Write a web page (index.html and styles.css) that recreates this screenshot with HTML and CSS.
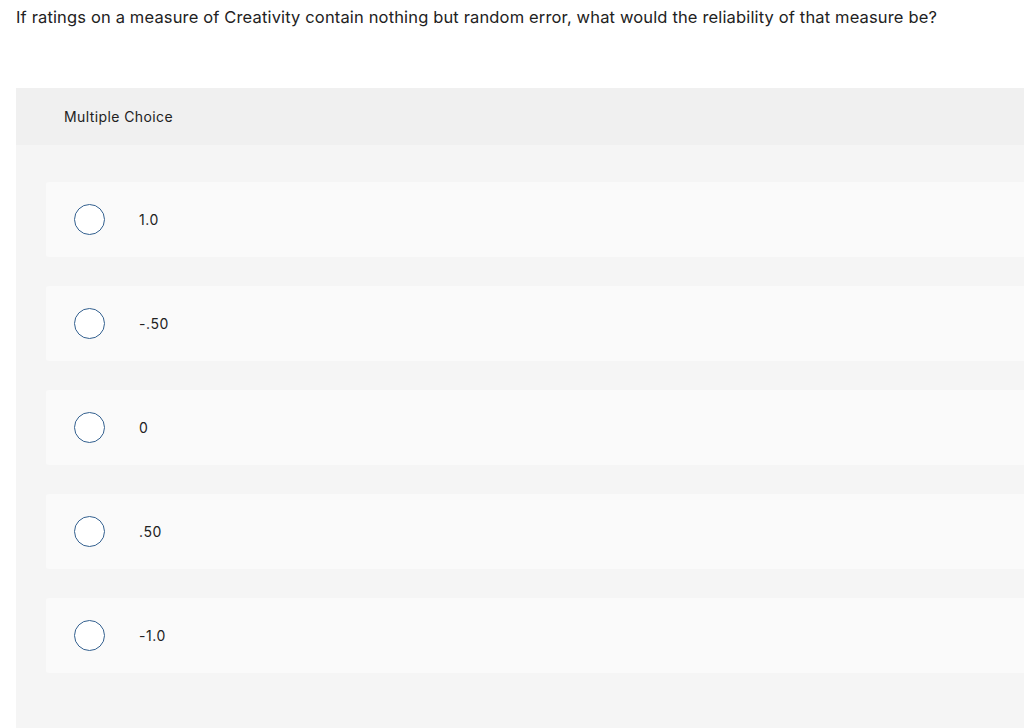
FILE: index.html
```html
<html>
<head>
  <link rel="stylesheet" href="styles.css">
</head>
<body>
  <p class="question">If ratings on a measure of Creativity contain nothing but random error, what would the reliability of that measure be?</p>
  <div class="card">
    <div class="card-head">Multiple Choice</div>
    <div class="card-body">
      <label class="option"><span class="radio"></span><span class="answer">1.0</span></label>
      <label class="option"><span class="radio"></span><span class="answer">-.50</span></label>
      <label class="option"><span class="radio"></span><span class="answer">0</span></label>
      <label class="option"><span class="radio"></span><span class="answer">.50</span></label>
      <label class="option"><span class="radio"></span><span class="answer">-1.0</span></label>
    </div>
  </div>
</body>
</html>
```
FILE: styles.css
```css
/* page */
body {
  margin: 0;
  padding: 0 0 0 16px;
  font-family: "Inter", "Liberation Sans", sans-serif;
  color: #222;
  background: #fff;
  overflow: hidden;
}

/* question */
.question {
  margin: 0;
  padding-top: 7px;
  font-size: 16.5px;
  line-height: 20px;
  letter-spacing: 0.15px;
  color: #222;
}

/* card */
.card {
  margin-top: 61px;
  background: #f5f5f5;
}

.card-head {
  height: 57px;
  padding-left: 48px;
  display: flex;
  align-items: center;
  font-size: 14px;
  letter-spacing: 0.4px;
  background: #f0f0f0;
}

.card-body {
  padding: 37px 0 60px 30px;
  display: flex;
  flex-direction: column;
  gap: 29px;
}

/* options */
.option {
  height: 75px;
  display: flex;
  align-items: center;
  background: #fafafa;
  border-radius: 3px 0 0 3px;
}

.radio {
  width: 29px;
  height: 29px;
  margin-left: 28px;
  border: 1.5px solid #33608f;
  border-radius: 50%;
  background: #fff;
}

.answer {
  margin-left: 34px;
  font-size: 14px;
  letter-spacing: 0.6px;
}
```
